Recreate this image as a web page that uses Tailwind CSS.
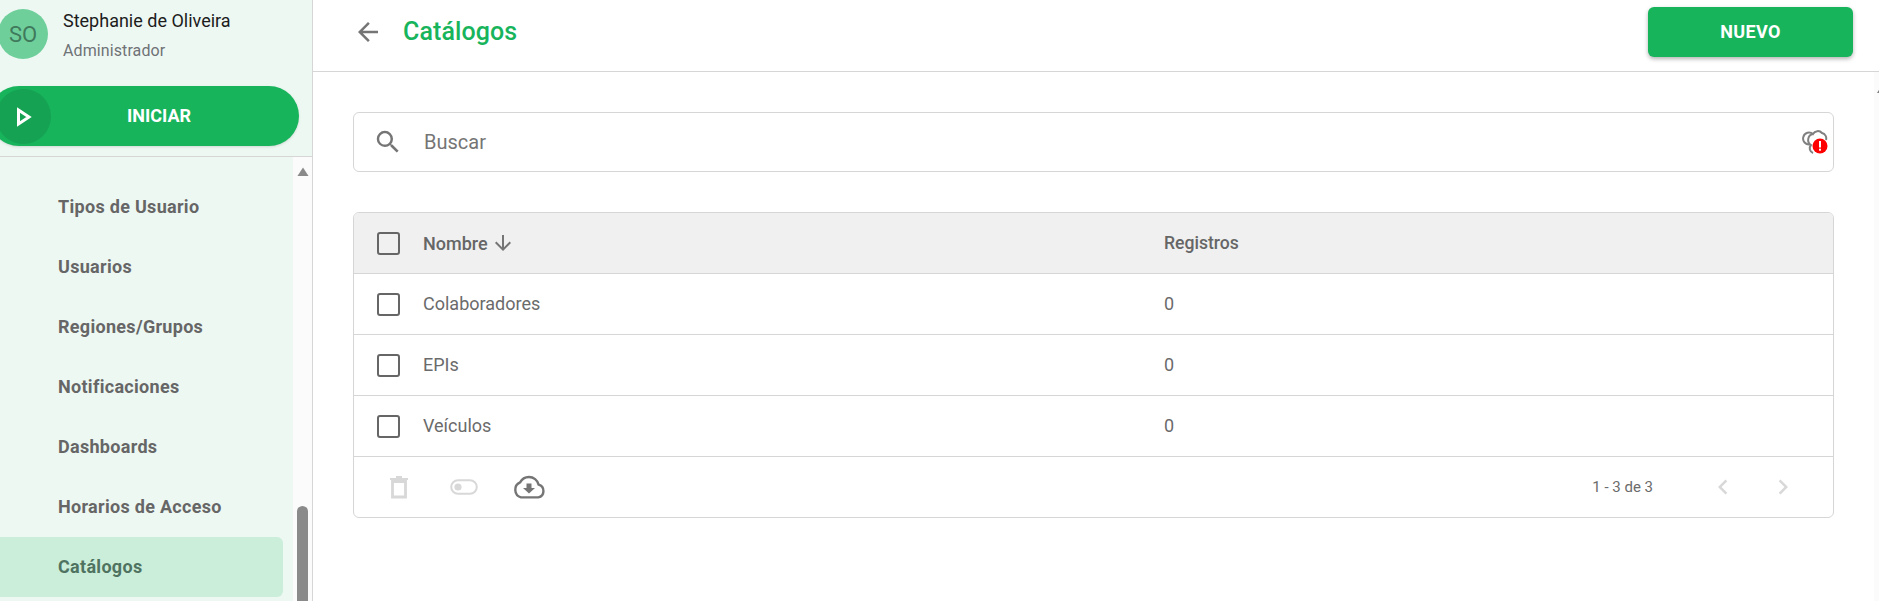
<!DOCTYPE html>
<html lang="en">
<head>
  <meta charset="UTF-8" />
  <title>Catálogos</title>
  <script src="https://cdn.jsdelivr.net/npm/@tailwindcss/browser@4"></script>
</head>
<body class="bg-white font-['Roboto',sans-serif] overflow-hidden">
  <div class="flex h-[601px] w-[1879px] overflow-hidden">

    <!-- Sidebar -->
    <aside class="w-[313px] shrink-0 flex flex-col border-r border-[#d6d6d6] bg-[#eef8f3]">
      <div class="h-[157px] shrink-0 border-b border-[#d6d6d6] overflow-hidden">
        <div class="flex h-[86px] -ml-[2px]">
          <div class="mt-[9px] w-[50px] h-[50px] rounded-full bg-[#6fcf9b] flex items-center justify-center text-[22px] text-[#3f7a5c]">SO</div>
          <div class="ml-[15px]">
            <p class="mt-[9px] text-[18px] leading-[24px] text-[#1c1c1c]">Stephanie de Oliveira</p>
            <p class="mt-[8px] text-[16px] leading-[20px] tracking-[0.1px] text-[#6f7276]">Administrador</p>
          </div>
        </div>
        <div class="relative flex items-center justify-center h-[60px] w-[310px] -ml-[11px] rounded-full bg-[#17b45c] shadow-sm">
          <div class="absolute left-[7px] top-[3px] w-[55px] h-[55px] rounded-full bg-[#16a253] flex items-center justify-center">
            <svg width="16" height="20" viewBox="0 0 16 20"><path d="M2.5 3 L13 10 L2.5 17 Z" fill="none" stroke="#fff" stroke-width="3"/></svg>
          </div>
          <span class="ml-[30px] pb-[2px] text-[18px] font-bold text-white">INICIAR</span>
        </div>
      </div>

      <div class="flex flex-1 min-h-0">
        <nav class="w-[293px] shrink-0 pt-[20px] pr-[10px] text-[18px] font-bold text-[#666] tracking-[0.3px]">
          <a class="flex items-center h-[60px] pb-[2px] pl-[58px]">Tipos de Usuario</a>
          <a class="flex items-center h-[60px] pb-[2px] pl-[58px]">Usuarios</a>
          <a class="flex items-center h-[60px] pb-[2px] pl-[58px]">Regiones/Grupos</a>
          <a class="flex items-center h-[60px] pb-[2px] pl-[58px]">Notificaciones</a>
          <a class="flex items-center h-[60px] pb-[2px] pl-[58px]">Dashboards</a>
          <a class="flex items-center h-[60px] pb-[2px] pl-[58px]">Horarios de Acceso</a>
          <a class="flex items-center h-[60px] pb-[2px] pl-[58px] rounded-r-md bg-[#cbeedb] text-[#4f7360]">Catálogos</a>
        </nav>
        <div class="w-[19px] shrink-0 bg-[#fbfbfb] flex flex-col items-center">
          <svg class="mt-[10px]" width="12" height="10" viewBox="0 0 12 10"><path d="M6 0.5 L11.8 9.5 L0.2 9.5 Z" fill="#8a8a8a"/></svg>
          <div class="mt-[329px] w-[11px] h-[100px] rounded-t-full bg-[#8a8a8a]"></div>
        </div>
      </div>
    </aside>

    <!-- Main -->
    <main class="flex-1 min-w-0 flex flex-col">
      <header class="h-[72px] shrink-0 border-b border-[#d6d6d6] flex items-center pb-[7px] pl-[40px] pr-[26px]">
        <svg width="30" height="30" viewBox="0 0 24 24" fill="#757575"><path d="M20 11H7.83l5.59-5.59L12 4l-8 8 8 8 1.41-1.41L7.83 13H20v-2z"/></svg>
        <h1 class="ml-[20px] text-[25px] font-medium tracking-[0.1px] text-[#17b45c]">Catálogos</h1>
        <button class="ml-auto h-[50px] w-[205px] rounded-md bg-[#17b45c] text-white text-[18px] font-bold tracking-[0.4px] shadow-[0_2px_4px_rgba(0,0,0,0.3)]"><span class="block pb-[2px]">NUEVO</span></button>
      </header>

      <div class="flex-1 flex relative">
        <div class="pl-[40px] pt-[40px]">
          <!-- Search -->
          <div class="w-[1481px] h-[60px] border border-[#d6d6d6] rounded-md flex items-center pl-[19px] pr-[5px]">
            <svg width="30" height="30" viewBox="0 0 24 24" fill="#757575"><path d="M15.5 14h-.79l-.28-.27A6.47 6.47 0 0 0 16 9.5 6.5 6.5 0 1 0 9.5 16c1.61 0 3.09-.59 4.23-1.57l.27.28v.79l5 4.99L20.49 19l-4.99-5zm-6 0C7.01 14 5 11.99 5 9.5S7.01 5 9.5 5 14 7.01 14 9.5 11.99 14 9.5 14z"/></svg>
            <span class="ml-[21px] text-[20px] text-[#757575]">Buscar</span>
            <svg class="ml-auto" width="26" height="26" viewBox="0 0 26 26">
              <g fill="none" stroke="#808080" stroke-width="2">
                <path d="M8 15.500 A6 6 0 1 1 11 5 A5.500 5.500 0 0 1 20 4 A5.500 5.500 0 0 1 24 11"/>
                <path d="M11 5 A6 6 0 0 0 9 16 A5 5 0 0 0 11 24"/>
              </g>
              <circle cx="18" cy="17" r="7.500" fill="#f00"/>
              <rect x="17" y="12" width="2" height="6.500" fill="#fff"/>
              <rect x="17" y="19.700" width="2" height="2" fill="#fff"/>
            </svg>
          </div>

          <!-- Table -->
          <div class="mt-[40px] w-[1481px] border border-[#d6d6d6] rounded-md overflow-hidden text-[18px] text-[#6b6b6b]">
            <div class="flex items-center h-[61px] bg-[#f0f0f0] border-b border-[#d6d6d6] font-medium text-[#666]">
              <span class="ml-[23px] w-[23px] h-[23px] border-2 border-[#666] rounded-[3px]"></span>
              <span class="ml-[23px] flex items-center gap-[3px]">Nombre
                <svg width="24" height="24" viewBox="0 0 24 24" fill="#757575"><path d="M20 12l-1.41-1.41L13 16.17V4h-2v12.17l-5.58-5.59L4 12l8 8 8-8z"/></svg>
              </span>
              <span class="absolute left-[851px] text-[17.6px] pt-[1px]">Registros</span>
            </div>
            <div class="flex items-center h-[61px] border-b border-[#d6d6d6]">
              <span class="ml-[23px] w-[23px] h-[23px] border-2 border-[#666] rounded-[3px]"></span>
              <span class="ml-[23px] pb-[2px]">Colaboradores</span>
              <span class="absolute left-[851px] pb-[2px]">0</span>
            </div>
            <div class="flex items-center h-[61px] border-b border-[#d6d6d6]">
              <span class="ml-[23px] w-[23px] h-[23px] border-2 border-[#666] rounded-[3px]"></span>
              <span class="ml-[23px] pb-[2px]">EPIs</span>
              <span class="absolute left-[851px] pb-[2px]">0</span>
            </div>
            <div class="flex items-center h-[61px] border-b border-[#d6d6d6]">
              <span class="ml-[23px] w-[23px] h-[23px] border-2 border-[#666] rounded-[3px]"></span>
              <span class="ml-[23px] pb-[2px]">Veículos</span>
              <span class="absolute left-[851px] pb-[2px]">0</span>
            </div>
            <div class="flex items-center h-[60px]">
              <svg class="ml-[36px]" width="18" height="24" viewBox="0 0 18 24"><path d="M0 3h18v2H0zM6 1h6v2H6z" fill="#d8d8d8"/><path d="M2.500 6.500h13v15.500h-13z" fill="none" stroke="#d8d8d8" stroke-width="2.800"/></svg>
              <svg class="ml-[42px]" width="28" height="16" viewBox="0 0 28 16"><rect x="1.200" y="1.200" width="25.600" height="13.600" rx="6.800" fill="none" stroke="#d8d8d8" stroke-width="2"/><circle cx="8" cy="8" r="3.600" fill="#d8d8d8"/></svg>
              <svg class="ml-[35px]" width="32" height="24" viewBox="0 0 32 24"><path d="M25.600 9.600A9.900 9.900 0 0 0 16 2a10 10 0 0 0-8.900 5.400A8 8 0 0 0 8 22.400h17.300a6.600 6.600 0 0 0 .3-12.800z" fill="none" stroke="#757575" stroke-width="2.400"/><path d="M13.500 8.500h5v4.500h3.500L16 18.500l-6-5.500h3.500z" fill="#757575"/></svg>
              <span class="ml-auto text-[15px]">1 - 3 de 3</span>
              <svg class="ml-[55px]" width="30" height="30" viewBox="0 0 24 24" fill="#d8d8d8"><path d="M15.410 7.410L14 6l-6 6 6 6 1.410-1.410L10.830 12z"/></svg>
              <svg class="ml-[30px] mr-[35px]" width="30" height="30" viewBox="0 0 24 24" fill="#d8d8d8"><path d="M10 6L8.590 7.410 13.170 12l-4.580 4.590L10 18l6-6z"/></svg>
            </div>
          </div>
        </div>
        <!-- Page scrollbar -->
        <div class="absolute right-0 top-0 bottom-0 w-[5px] bg-[#fbfbfb] overflow-hidden pl-[3px]">
          <svg class="mt-[14px]" width="8" height="8" viewBox="0 0 8 8"><path d="M4 0.500L8 7H0z" fill="#808080"/></svg>
        </div>
      </div>
    </main>
  </div>
</body>
</html>
